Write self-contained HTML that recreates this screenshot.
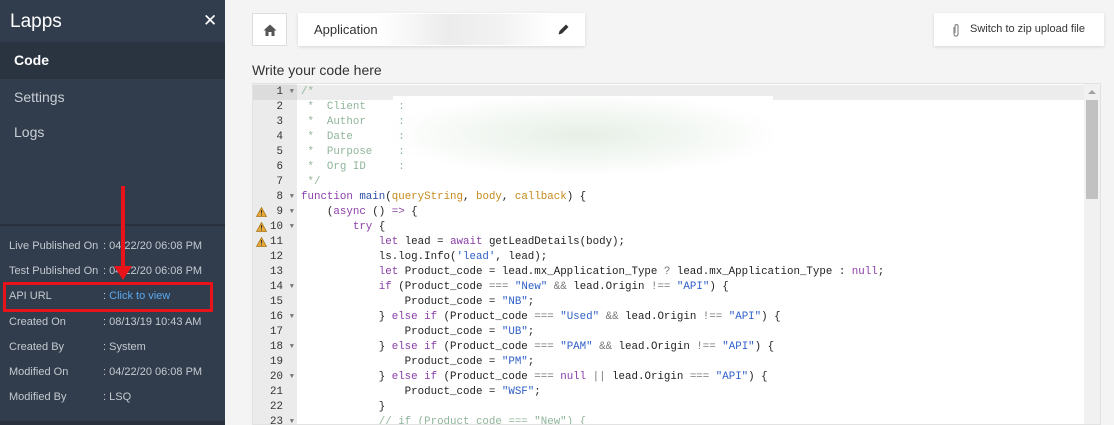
<!DOCTYPE html><html><head><style>
*{margin:0;padding:0;box-sizing:border-box}
body{width:1114px;height:425px;overflow:hidden;background:#f4f4f4;font-family:"Liberation Sans",sans-serif;position:relative}
.sb{position:absolute;left:0;top:0;width:225px;height:425px;background:#313c4c;color:#d8dde3}
.sb .t{position:absolute;left:10px;top:11px;font-size:19px;color:#fff}
.sb .x{position:absolute;left:203px;top:11px;font-size:17px;color:#fff}
.nav{position:absolute;left:0;width:225px;height:37px;padding-left:14px;line-height:37px;font-size:14px;color:#c9cfd6}
.info{position:absolute;left:9px;font-size:11px;color:#c4cad1}
.info span{position:absolute;left:94px;white-space:nowrap}
.ed{position:absolute;left:252px;top:83px;width:849px;height:342px;background:#fff;border:1px solid #e2e2e2;overflow:hidden}
.gut{position:absolute;left:0;top:0;width:44px;height:342px;background:#ebebeb}
.ln{position:absolute;left:0;width:44px;height:15px;font:10.8px/15px "Liberation Mono",monospace;color:#333;text-align:right;padding-right:14px}
.ln i{position:absolute;right:3px;top:0;font-style:normal;font-size:7px;color:#777}
.cl{position:absolute;left:48px;height:15px;font:10.8px/15px "Liberation Mono",monospace;color:#222;white-space:pre}
.k{color:#8a3ea8}.f{color:#2c4fa8}.p{color:#c58a1c}.s{color:#3060c8}.c{color:#8fb59a}.o{color:#777}
.w{position:absolute;left:3px;width:11px;height:10px}
</style></head><body>
<div class="sb">
<div class="t">Lapps</div><div class="x">✕</div>
<div class="nav" style="top:42px;background:#2a3441;color:#fff;font-weight:bold">Code</div>
<div class="nav" style="top:79px">Settings</div>
<div class="nav" style="top:114px">Logs</div>
<div style="position:absolute;left:0;top:224px;width:225px;height:2px;background:#28313d"></div>
<div class="info" style="top:240px">Live Published On<span>: 04/22/20 06:08 PM</span></div>
<div class="info" style="top:265px">Test Published On<span>: 04/22/20 06:08 PM</span></div>
<div class="info" style="top:290px">API URL<span>: <b style="font-weight:normal;color:#5aa9f0">Click to view</b></span></div>
<div class="info" style="top:316px">Created On<span>: 08/13/19 10:43 AM</span></div>
<div class="info" style="top:341px">Created By<span>: System</span></div>
<div class="info" style="top:366px">Modified On<span>: 04/22/20 06:08 PM</span></div>
<div class="info" style="top:391px">Modified By<span>: LSQ</span></div>
<div style="position:absolute;left:0;top:421px;width:225px;height:4px;background:#28313d"></div>
<div style="position:absolute;left:3px;top:282px;width:210px;height:30px;border:3px solid #e8141a"></div>
<div style="position:absolute;left:121px;top:186px;width:4px;height:82px;background:#e8141a"></div>
<div style="position:absolute;left:114px;top:266px;width:0;height:0;border-left:9px solid transparent;border-right:9px solid transparent;border-top:14px solid #e8141a"></div>
</div>
<div style="position:absolute;left:252px;top:13px;width:35px;height:33px;background:#fff;border:1px solid #ddd"><svg width="35" height="33"><path d="M10.5 16.5 L17 10.5 L23.5 16.5 H21.5 V22 H18.5 V18 H15.5 V22 H12.5 V16.5 Z" fill="#555"/></svg></div>
<div style="position:absolute;left:298px;top:13px;width:287px;height:33px;background:#fff;box-shadow:0 1px 3px rgba(0,0,0,.12)">
<div style="position:absolute;left:16px;top:9px;font-size:13px;color:#333">Application</div>
<div style="position:absolute;left:80px;top:1px;width:175px;height:31px;background:linear-gradient(90deg,#fff,#ececec 40%,#f2f2f2 70%,#fff)"></div>
<svg style="position:absolute;left:259px;top:10px" width="13" height="13"><path d="M1.5 11.5 L2.5 8 L9 1.5 L11.5 4 L5 10.5 Z" fill="#333"/></svg></div>
<div style="position:absolute;left:934px;top:13px;width:170px;height:33px;background:#fff;box-shadow:0 1px 3px rgba(0,0,0,.12)">
<svg style="position:absolute;left:18px;top:10px" width="8" height="14"><path d="M2 4 V11 A2 2 0 0 0 6 11 V3 A1.5 1.5 0 0 0 3 3 V10" fill="none" stroke="#888" stroke-width="1.2"/></svg>
<div style="position:absolute;left:36px;top:10px;font-size:11px;color:#333">Switch to zip upload file</div></div>
<div style="position:absolute;left:252px;top:62px;font-size:14px;color:#333">Write your code here</div>
<div class="ed"><div class="gut"></div>
<div style="position:absolute;left:44px;top:1px;width:790px;height:15px;background:#ececec"></div>
<div style="position:absolute;left:0;top:1px;width:44px;height:15px;background:#dcdcdc"></div>
<div style="position:absolute;left:140px;top:12px;width:380px;height:78px;background:radial-gradient(ellipse at 50% 50%,#e6efe6,#fff 75%)"></div>
<div style="position:absolute;left:831px;top:0;width:17px;height:342px;background:#f1f1f1"></div>
<div style="position:absolute;left:833px;top:16px;width:12px;height:99px;background:#c1c1c1"></div>
<div style="position:absolute;left:835px;top:6px;border-left:4px solid transparent;border-right:4px solid transparent;border-bottom:4px solid #a0a0a0"></div>
<div id="g"></div></div>
<script>
var L=[
'<span class="c">/*</span>',
'<span class="c"> *  Client     :</span>',
'<span class="c"> *  Author     :</span>',
'<span class="c"> *  Date       :</span>',
'<span class="c"> *  Purpose    :</span>',
'<span class="c"> *  Org ID     :</span>',
'<span class="c"> */</span>',
'<span class="k">function</span> <span class="f">main</span>(<span class="p">queryString</span>, <span class="p">body</span>, <span class="p">callback</span>) {',
'    (<span class="k">async</span> () <span class="k">=&gt;</span> {',
'        <span class="k">try</span> {',
'            <span class="k">let</span> lead = <span class="k">await</span> getLeadDetails(body);',
'            ls.log.Info(<span class="s">\'lead\'</span>, lead);',
'            <span class="k">let</span> Product_code = lead.mx_Application_Type <span class="o">?</span> lead.mx_Application_Type : <span class="k">null</span>;',
'            <span class="k">if</span> (Product_code <span class="o">===</span> <span class="s">"New"</span> <span class="o">&amp;&amp;</span> lead.Origin <span class="o">!==</span> <span class="s">"API"</span>) {',
'                Product_code = <span class="s">"NB"</span>;',
'            } <span class="k">else if</span> (Product_code <span class="o">===</span> <span class="s">"Used"</span> <span class="o">&amp;&amp;</span> lead.Origin <span class="o">!==</span> <span class="s">"API"</span>) {',
'                Product_code = <span class="s">"UB"</span>;',
'            } <span class="k">else if</span> (Product_code <span class="o">===</span> <span class="s">"PAM"</span> <span class="o">&amp;&amp;</span> lead.Origin <span class="o">!==</span> <span class="s">"API"</span>) {',
'                Product_code = <span class="s">"PM"</span>;',
'            } <span class="k">else if</span> (Product_code <span class="o">===</span> <span class="k">null</span> <span class="o">||</span> lead.Origin <span class="o">===</span> <span class="s">"API"</span>) {',
'                Product_code = <span class="s">"WSF"</span>;',
'            }',
'            <span class="c">// if (Product_code === "New") {</span>'];
var fold=[1,8,9,10,14,16,18,20,23],h='';
for(var i=0;i<L.length;i++){var t=1+15*i,n=i+1;
h+='<div class="ln" style="top:'+t+'px">'+n+(fold.indexOf(n)>=0?'<i>▼</i>':'')+'</div>';
if(n>=9&&n<=11)h+='<svg class="w" style="top:'+(t+2)+'px" width="11" height="10"><path d="M5.5 0.5 L10.5 9.5 H0.5 Z" fill="#e8a93a" stroke="#a8781a" stroke-width=".8"/><rect x="5" y="3" width="1" height="3.5" fill="#333"/><rect x="5" y="7.5" width="1" height="1" fill="#333"/></svg>';
h+='<div class="cl" style="top:'+t+'px">'+L[i]+'</div>';}
document.getElementById('g').innerHTML=h;
</script>
</body></html>
